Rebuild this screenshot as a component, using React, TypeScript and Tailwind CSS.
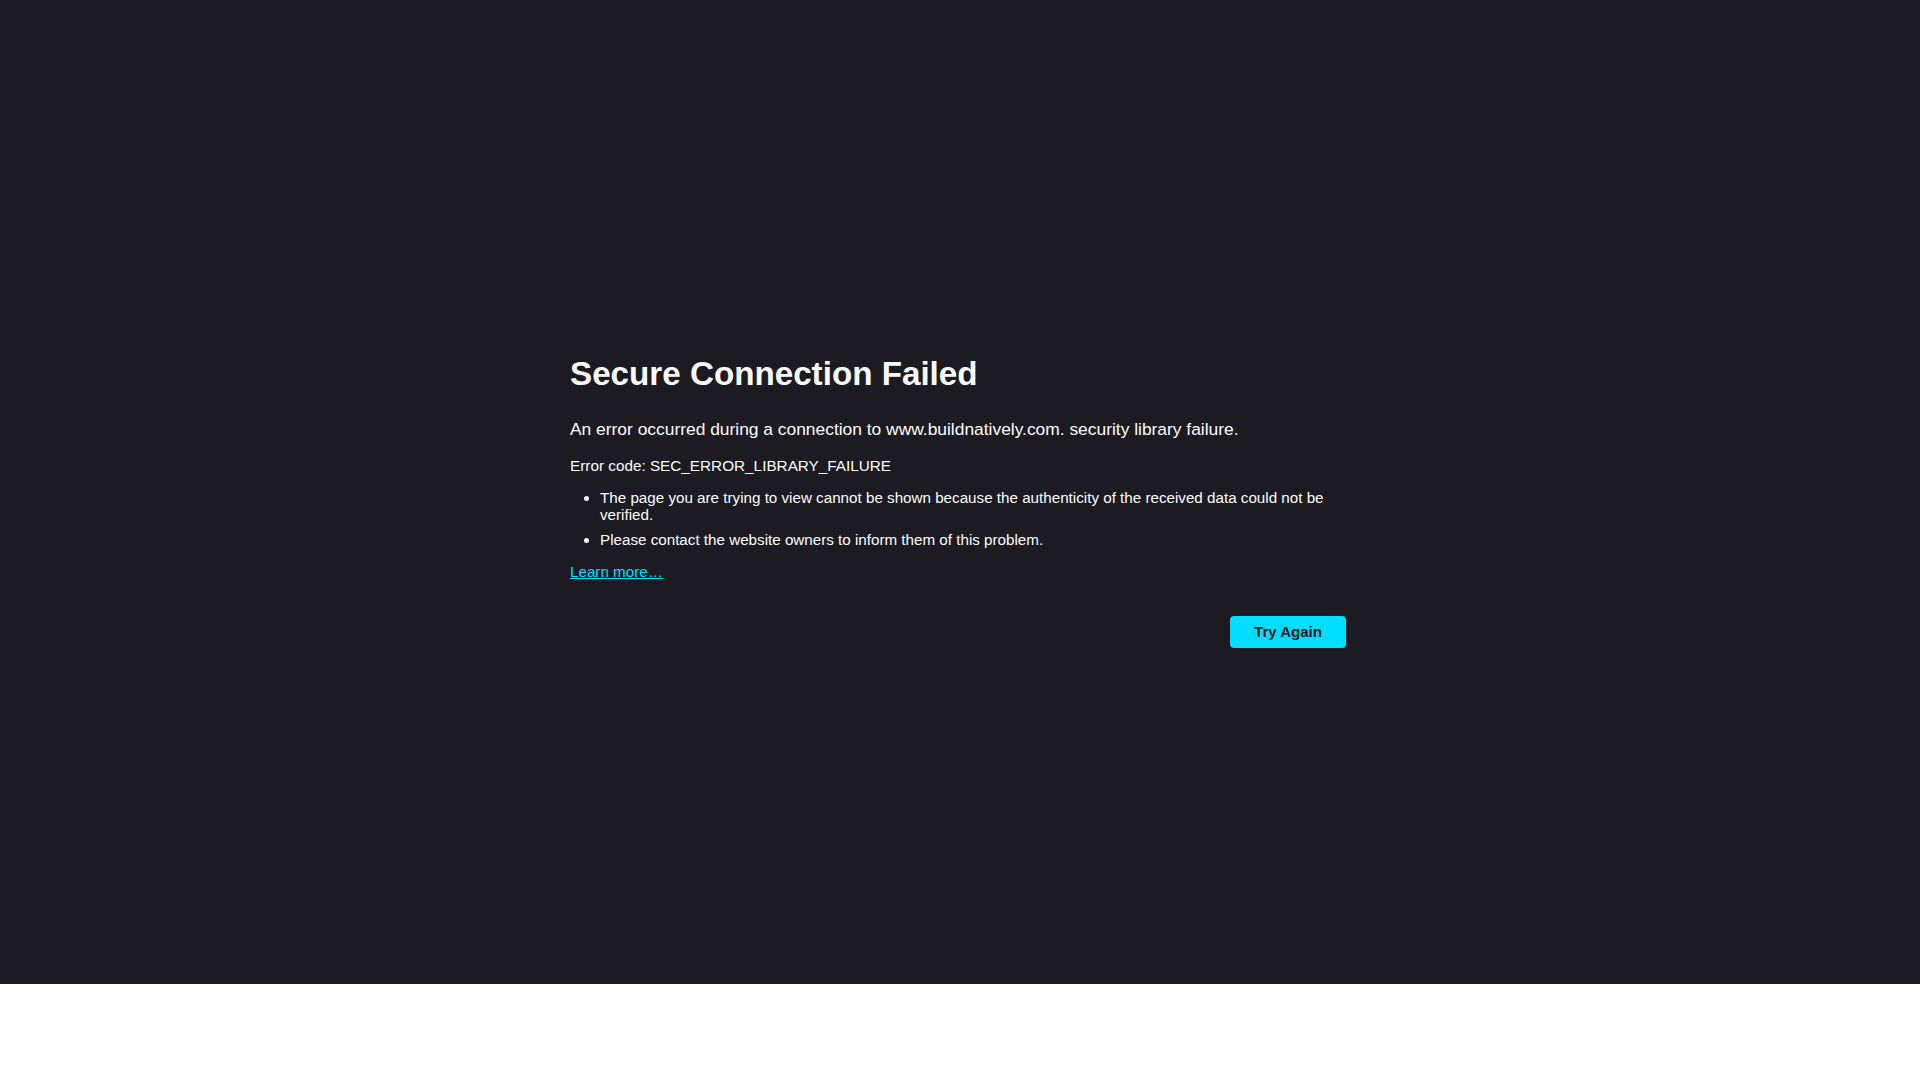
export default function App() {
  return (
    <div className="min-h-screen bg-white font-['Liberation_Sans',Arial,sans-serif]">
      <div className="h-[984px] bg-[#1c1b22] text-[#fbfbfe] pt-[355px]">
        <div className="ml-[570px] w-[776px]">
          <h1 className="text-[33.2px] leading-[38px] font-bold">Secure Connection Failed</h1>
          <p className="mt-[24px] text-[17.4px] leading-[24px]">
            An error occurred during a connection to www.buildnatively.com. security library failure.
          </p>
          <p className="mt-[15px] text-[15.3px] leading-[20px]">Error code: SEC_ERROR_LIBRARY_FAILURE</p>
          <ul className="mt-[13px] pl-[30px] text-[15.2px] leading-[17px] list-disc flex flex-col gap-[8px]">
            <li>
              The page you are trying to view cannot be shown because the authenticity of the received data could not be
              verified.
            </li>
            <li>Please contact the website owners to inform them of this problem.</li>
          </ul>
          <a href="#" className="block w-fit mt-[15px] text-[15.2px] leading-[17px] text-[#00ddff] underline">
            Learn more…
          </a>
          <div className="mt-[36px] flex justify-end">
            <button className="h-[32px] w-[116px] rounded-[4px] bg-[#00ddff] text-[#15141a] text-[15px] font-bold">
              Try Again
            </button>
          </div>
        </div>
      </div>
    </div>
  );
}
